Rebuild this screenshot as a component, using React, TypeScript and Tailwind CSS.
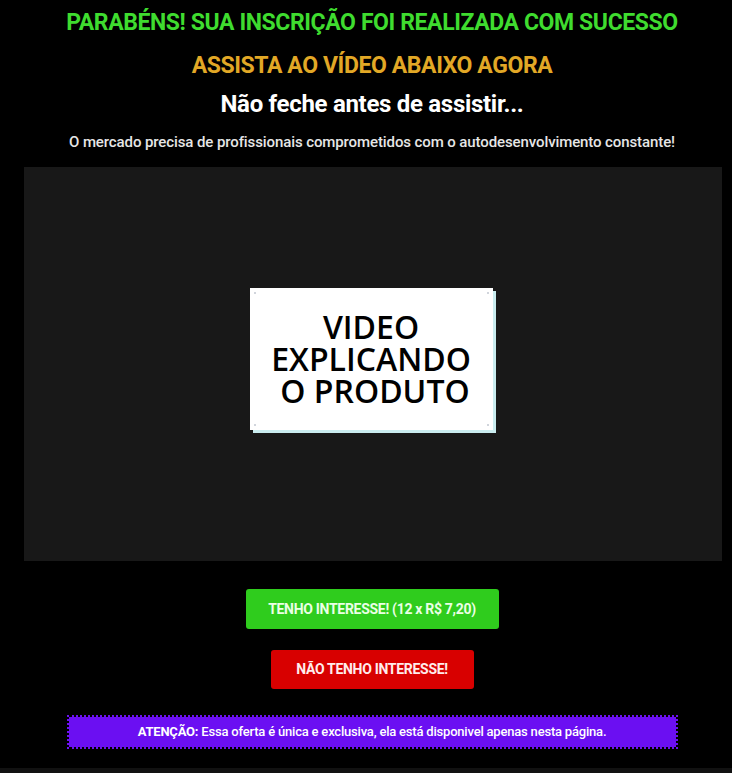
import React from "react"

const heading = { fontFamily: '"Roboto", "Liberation Sans", sans-serif' }

export default function App() {
  return (
    <div className="min-h-[773px] bg-black" style={heading}>
      <div className="flex flex-col items-center pt-[9px] pl-[12px]">
        <h1 className="text-[23px] leading-[27px] font-bold tracking-[-0.4px] text-[#3fdc2f]">
          PARABÉNS! SUA INSCRIÇÃO FOI REALIZADA COM SUCESSO
        </h1>
        <h2 className="mt-[16px] text-[23px] leading-[27px] font-bold tracking-[-0.4px] text-[#e2a826]">
          ASSISTA AO VÍDEO ABAIXO AGORA
        </h2>
        <h3 className="mt-[11px] text-[24px] leading-[29px] font-bold tracking-[-0.3px] text-white">
          Não feche antes de assistir...
        </h3>
        <p className="mt-[13px] text-[15px] leading-[20px] font-medium tracking-[-0.1px] text-[#e6e6e6]">
          O mercado precisa de profissionais comprometidos com o autodesenvolvimento constante!
        </p>
      </div>

      <div className="ml-[24px] mr-[10px] mt-[15px] flex h-[394px] items-center justify-center bg-[#181818]">
        <div className="relative -mt-[10px] -ml-[4px] flex h-[142px] w-[243px] items-center justify-center bg-white shadow-[3px_3px_0_#c9ecef]">
          <span className="absolute left-[4px] top-[4px] h-[2px] w-[2px] bg-gray-300" />
          <span className="absolute right-[4px] top-[4px] h-[2px] w-[2px] bg-gray-300" />
          <span className="absolute left-[4px] bottom-[4px] h-[2px] w-[2px] bg-gray-300" />
          <span className="absolute right-[4px] bottom-[4px] h-[2px] w-[2px] bg-gray-300" />
          <div
            className="flex flex-col items-center text-[32px] leading-[32px] font-semibold text-black"
            style={{ fontFamily: '"Open Sans", "Liberation Sans", sans-serif' }}
          >
            <span>VIDEO</span>
            <span>EXPLICANDO</span>
            <span className="pl-[8px]">O PRODUTO</span>
          </div>
        </div>
      </div>

      <div className="flex flex-col items-center pl-[12px]">
        <button className="mt-[28px] h-[40px] w-[253px] rounded-[3px] bg-[#2fcc1d] text-[14px] font-bold tracking-[-0.3px] text-[#eaffe5]">
          TENHO INTERESSE! (12 x R$ 7,20)
        </button>
        <button className="mt-[21px] h-[39px] w-[203px] rounded-[3px] bg-[#d80000] text-[14px] font-bold tracking-[-0.3px] text-[#ffecec]">
          NÃO TENHO INTERESSE!
        </button>
        <div className="mt-[26px] flex h-[34px] w-[611px] items-center justify-center border-2 border-dotted border-[#6b10f0] bg-[#6b0ff2] bg-clip-padding text-[13px] font-medium tracking-[-0.2px] text-white">
          <span>
            <b className="font-bold">ATENÇÃO:</b> Essa oferta é única e exclusiva, ela está disponivel apenas nesta página.
          </span>
        </div>
      </div>

      <div className="mt-[19px] h-[5px] bg-[#111111]" />
    </div>
  )
}
